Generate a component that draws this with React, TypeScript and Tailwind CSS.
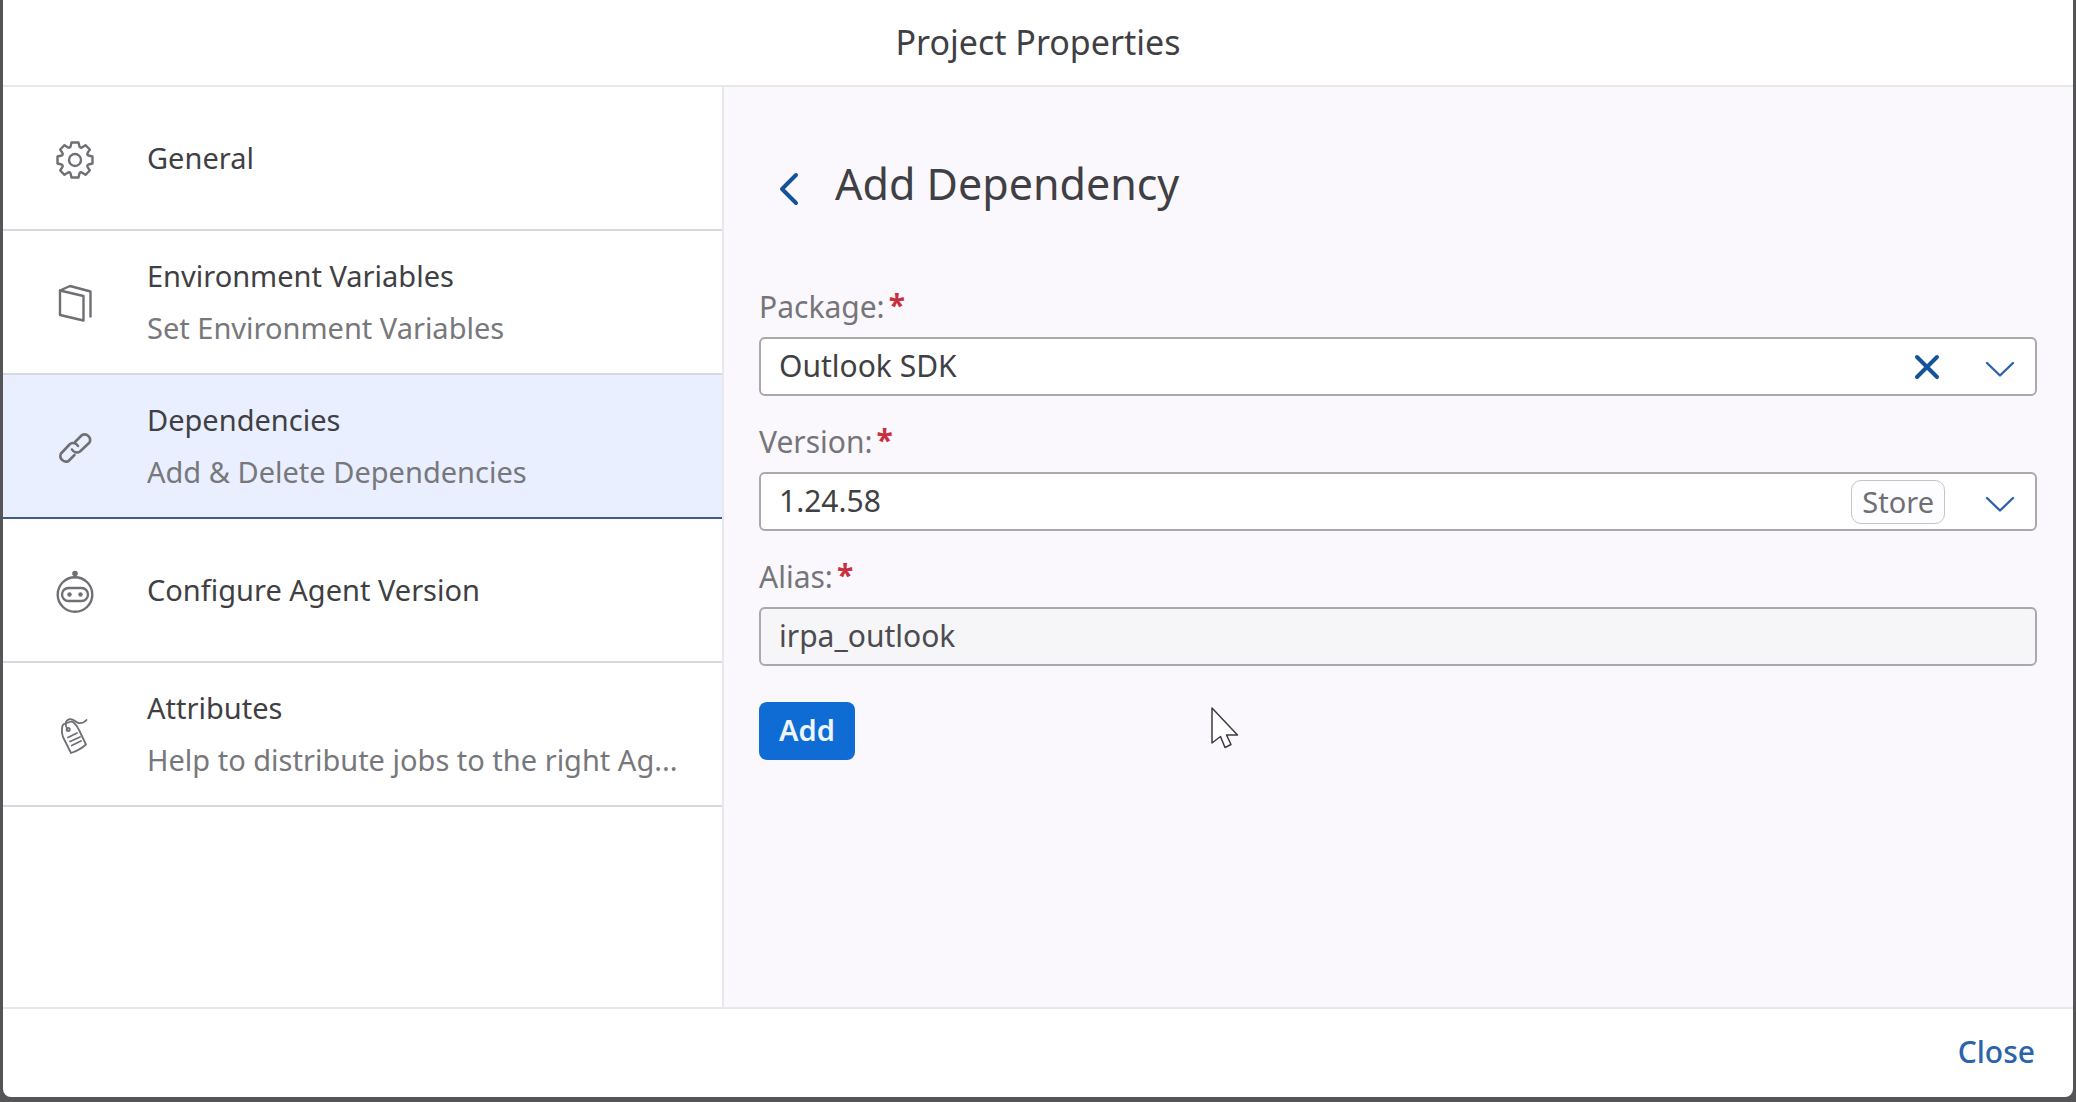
import { useState, type ReactNode } from "react";

const stroke = {
  fill: "none",
  stroke: "currentColor",
  strokeWidth: 2.4,
  strokeLinecap: "round" as const,
  strokeLinejoin: "round" as const,
};

function GearIcon() {
  return (
    <svg viewBox="0 0 40 40" className="size-10" aria-hidden="true" {...stroke}>
      <path d="M16.500 2.500h7l1 4.200q1 1.800 2.800.5l3.200-2 4.300 4.300-2 3.200q-1.300 1.800.5 2.800l4.200 1v7l-4.200 1q-1.800 1-.5 2.800l2 3.200-4.300 4.300-3.200-2q-1.800-1.300-2.800.5l-1 4.200h-7l-1-4.200q-1-1.800-2.800-.5l-3.200 2-4.300-4.300 2-3.200q1.300-1.800-.5-2.800l-4.200-1v-7l4.200-1q1.800-1 .5-2.800l-2-3.200 4.300-4.300 3.200 2q1.800 1.300 2.800-.5Z" />
      <circle cx="20" cy="20" r="6" />
    </svg>
  );
}

function BoxIcon() {
  return (
    <svg viewBox="0 0 40 40" className="size-10" aria-hidden="true" {...stroke}>
      <path d="M5 6.500 28.500 12V36.500L5 31Z" />
      <path d="M5 6.500 15 2 35.500 7.500V32.500" />
    </svg>
  );
}

function LinkIcon() {
  return (
    <svg viewBox="0 0 40 40" className="size-10" aria-hidden="true" {...stroke} strokeWidth={2.6}>
      <path d="M20 14 27 7a5.600 5.600 0 0 1 7.500 7.500L25 23.500a5.500 5.500 0 0 1-8-2" />
      <path d="M23 18a5.500 5.500 0 0 0-8-2L6 25.500a5.600 5.600 0 0 0 7.500 7.500l6-6" />
    </svg>
  );
}

function RobotIcon() {
  return (
    <svg viewBox="0 0 40 44" className="h-11 w-10" aria-hidden="true" {...stroke}>
      <circle cx="20" cy="24.500" r="17.300" />
      <rect x="7" y="18" width="26" height="13" rx="6.500" />
      <circle cx="14.500" cy="24.500" r="2.200" fill="currentColor" stroke="none" />
      <circle cx="25.500" cy="24.500" r="2.200" fill="currentColor" stroke="none" />
      <path d="M20 7V4" />
      <circle cx="20" cy="3.500" r="2.800" fill="currentColor" stroke="none" />
    </svg>
  );
}

function TagIcon() {
  return (
    <svg viewBox="0 0 40 40" className="size-10" aria-hidden="true" {...stroke} strokeWidth={1.8}>
      <path d="M7 13Q7 9 9 8L16 5.500q2 0 3.500 1.800Q23 11 24 14L31 28.500Q25 34 16 37L8 21Q6.500 17 7 13Z" />
      <circle cx="13.200" cy="13.500" r="1.600" />
      <path d="M12.500 13C9.500 9 10 4 15 3.200c4-.4 5 3 8.500 3.800 3 .3 6-.5 8-3" />
      <path d="m13 21.500 9-4.500M15 25.500l10-4.500M16.700 29.500l9.300-4.500" />
    </svg>
  );
}

type Item = { id: string; title: string; subtitle?: string; icon: ReactNode };

const items: Item[] = [
  { id: "general", title: "General", icon: <GearIcon /> },
  { id: "environment", title: "Environment Variables", subtitle: "Set Environment Variables", icon: <BoxIcon /> },
  { id: "dependencies", title: "Dependencies", subtitle: "Add & Delete Dependencies", icon: <LinkIcon /> },
  { id: "agent", title: "Configure Agent Version", icon: <RobotIcon /> },
  { id: "attributes", title: "Attributes", subtitle: "Help to distribute jobs to the right Ag...", icon: <TagIcon /> },
];

function ChevronDown() {
  return (
    <svg viewBox="0 0 30 18" className="h-[18px] w-[30px]" aria-hidden="true" {...stroke}>
      <path d="M2 3 15 15.500 28 3" />
    </svg>
  );
}

function Field({ id, label, children }: { id: string; label: string; children: ReactNode }) {
  return (
    <div className="flex flex-col">
      <label htmlFor={id} className="flex h-[60px] items-start gap-1 pt-2.5 text-[30px] leading-10 text-[#75757a]">
        {label}:
        <span className="font-bold leading-9 text-[#c9303f]" aria-hidden="true">*</span>
      </label>
      {children}
    </div>
  );
}

const fieldBox = "flex h-[59px] w-full items-center rounded-md border-2 border-[#a9a8ab] bg-white text-[30px] text-[#3f3f44]";

export default function App() {
  const [active, setActive] = useState("dependencies");
  const [pkg, setPkg] = useState("Outlook SDK");

  return (
    <div className="h-screen bg-[#555457] px-[3px] pb-[5px] font-['Noto_Sans','Open_Sans',sans-serif] text-[#3f3f44]">
      <div role="dialog" aria-labelledby="dialog-title" className="flex h-full flex-col overflow-hidden rounded-b-lg bg-white">
        <header className="flex h-[87px] shrink-0 items-center justify-center border-b-2 border-[#e8e7ea] pb-0.5">
          <h1 id="dialog-title" className="text-[34px] leading-10">Project Properties</h1>
        </header>

        <div className="flex min-h-0 flex-1">
          <nav aria-label="Project settings" className="w-[721px] shrink-0 border-r-2 border-[#e8e7ea]">
            <ul>
              {items.map((item) => {
                const selected = item.id === active;
                return (
                  <li key={item.id}>
                    <button
                      type="button"
                      aria-current={selected ? "page" : undefined}
                      onClick={() => setActive(item.id)}
                      className={
                        selected
                          ? "flex h-36 w-full items-center border-b-2 border-[#42598f] bg-[#e9efff] pr-9 text-left"
                          : "flex h-36 w-full items-center border-b-2 border-[#d9d8dc] bg-white pr-9 text-left"
                      }
                    >
                      <span className="flex w-36 shrink-0 justify-center pt-1 text-[#6f6f74]">{item.icon}</span>
                      <span className="flex min-w-0 flex-1 flex-col gap-3 text-[29px] leading-10">
                        <span className="truncate">{item.title}</span>
                        {item.subtitle && <span className="truncate text-[#77777c]">{item.subtitle}</span>}
                      </span>
                    </button>
                  </li>
                );
              })}
            </ul>
          </nav>

          <main className="min-w-0 flex-1 bg-[#faf8fc] pr-9 pl-[35px]">
            <div className="flex h-[190px] items-start gap-5 pt-[70px]">
              <button type="button" aria-label="Back" className="flex h-14 w-14 items-center justify-center pt-2 pl-1 text-[#14539a]">
                <svg viewBox="0 0 20 34" className="h-[34px] w-5" aria-hidden="true" {...stroke} strokeWidth={4}>
                  <path d="M17 3 3 17l14 14" />
                </svg>
              </button>
              <h2 className="text-[43px] leading-[54px]">Add Dependency</h2>
            </div>

            <form onSubmit={(e) => e.preventDefault()} className="flex flex-col gap-4">
              <Field id="package" label="Package">
                <div className={fieldBox}>
                  <input
                    id="package"
                    role="combobox"
                    aria-expanded="false"
                    required
                    value={pkg}
                    onChange={(e) => setPkg(e.target.value)}
                    className="h-full min-w-0 flex-1 bg-transparent px-[18px] pb-0.5 outline-none"
                  />
                  <button type="button" aria-label="Clear" onClick={() => setPkg("")} className="flex h-full w-[76px] items-center justify-center text-[#14539a]">
                    <svg viewBox="0 0 26 26" className="size-[26px]" aria-hidden="true" {...stroke} strokeWidth={4}>
                      <path d="m3 3 20 20M23 3 3 23" />
                    </svg>
                  </button>
                  <button type="button" aria-label="Show packages" className="flex h-full w-[70px] items-center justify-center pt-1 text-[#2e62a8]">
                    <ChevronDown />
                  </button>
                </div>
              </Field>

              <Field id="version" label="Version">
                <div className={fieldBox}>
                  <input
                    id="version"
                    role="combobox"
                    aria-expanded="false"
                    required
                    defaultValue="1.24.58"
                    className="h-full min-w-0 flex-1 bg-transparent px-[18px] pb-0.5 outline-none"
                  />
                  <span className="mr-5 flex h-11 items-center rounded-[10px] border border-[#c4c3c7] bg-[#fdfcfe] px-2.5 text-[29px] text-[#6f6f74]">Store</span>
                  <button type="button" aria-label="Show versions" className="flex h-full w-[70px] items-center justify-center pt-1 text-[#2e62a8]">
                    <ChevronDown />
                  </button>
                </div>
              </Field>

              <Field id="alias" label="Alias">
                <input
                  id="alias"
                  readOnly
                  value="irpa_outlook"
                  className="h-[59px] w-full rounded-md border-2 border-[#a9a8ab] bg-[#f6f5f8] px-[18px] pb-0.5 text-[30px] text-[#4b4b50] outline-none"
                />
              </Field>

              <div className="pt-5">
                <button type="submit" className="flex h-[58px] items-center rounded-lg bg-[#0f6cd4] px-5 pb-0.5 text-[29px] font-semibold text-[#edf5ff]">
                  Add
                </button>
              </div>
            </form>
          </main>
        </div>

        <footer className="flex h-[90px] shrink-0 items-center justify-end border-t-2 border-[#e8e7ea] pr-[38px] pb-0.5">
          <button type="button" className="text-[30px] leading-10 font-medium text-[#2a64ab]">Close</button>
        </footer>
      </div>

      <svg viewBox="0 0 30 44" className="pointer-events-none fixed top-[706px] left-[1210px] h-11 w-[30px]" aria-hidden="true">
        <path d="M2 2V37L10.500 30.500 15 41.500 21 38.500 16.500 29H27.500Z" fill="#fff" stroke="#3c3c40" strokeWidth="1.500" strokeLinejoin="round" />
      </svg>
    </div>
  );
}
